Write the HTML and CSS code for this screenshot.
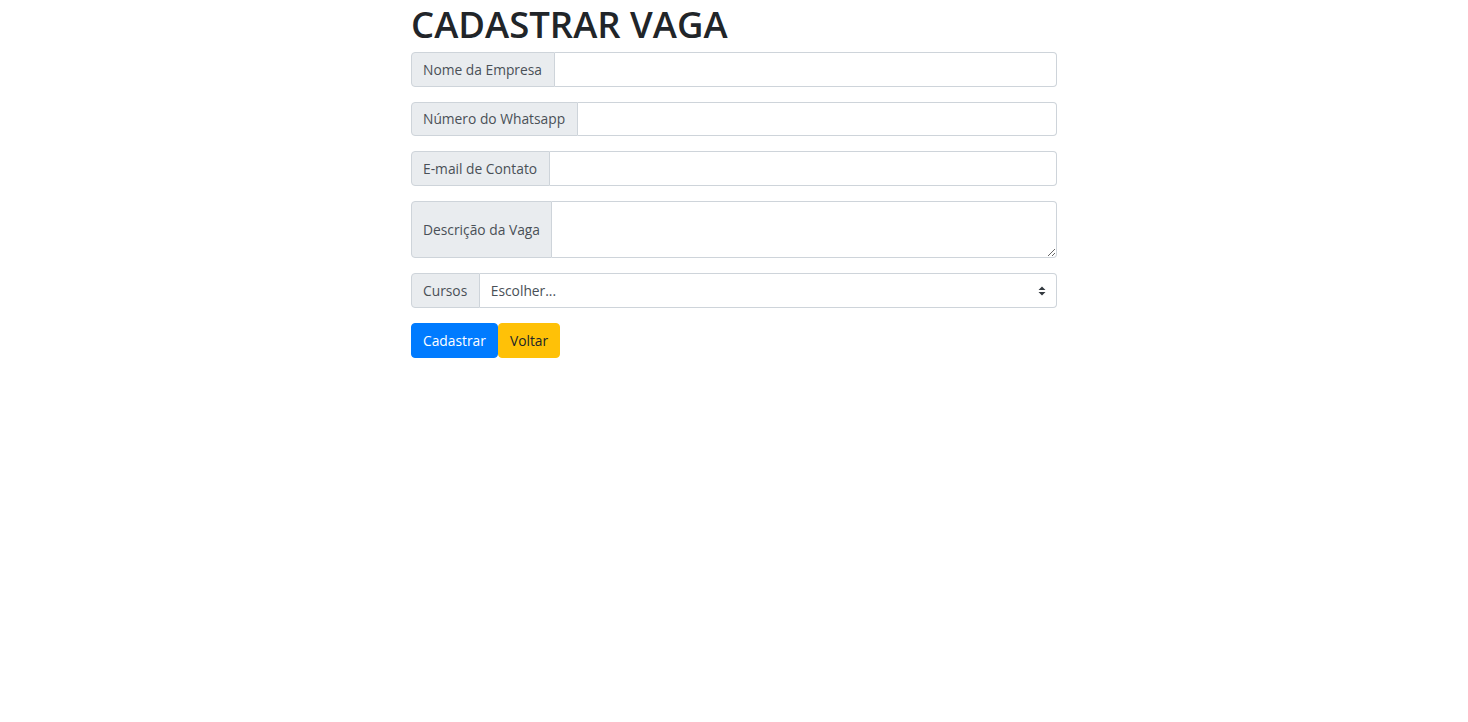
FILE: index.html
```html
<!DOCTYPE html>
<html lang="pt-BR">
<head>
<meta charset="utf-8">
<title>Cadastrar Vaga</title>
<link rel="stylesheet" href="styles.css">
</head>
<body>
<main class="container">
  <h1 class="title">CADASTRAR VAGA</h1>
  <form class="form">
    <div class="input-group">
      <span class="addon">Nome da Empresa</span>
      <input class="control" type="text">
    </div>
    <div class="input-group">
      <span class="addon">Número do Whatsapp</span>
      <input class="control" type="text">
    </div>
    <div class="input-group">
      <span class="addon">E-mail de Contato</span>
      <input class="control" type="email">
    </div>
    <div class="input-group tall">
      <span class="addon">Descrição da Vaga</span>
      <textarea class="control area"></textarea>
    </div>
    <div class="input-group">
      <span class="addon">Cursos</span>
      <div class="control select">
        <span class="select-text">Escolher...</span>
        <svg class="caret" width="8" height="10" viewBox="0 0 8 10"><path d="M4 0.5 L7.5 4 H0.5 Z M4 9.5 L0.5 6 H7.5 Z" fill="#343a40"/></svg>
      </div>
    </div>
    <div class="buttons">
      <button type="button" class="btn primary">Cadastrar</button>
      <button type="button" class="btn warning">Voltar</button>
    </div>
  </form>
</main>
</body>
</html>
```

FILE: styles.css
```css
* { box-sizing: border-box; }
html, body { margin: 0; padding: 0; background: #fff; }
body {
  font-family: "Open Sans", "Noto Sans", sans-serif;
  color: #212529;
}
.container {
  width: 646px;
  margin: 0 auto;
}
.title {
  margin: 0;
  padding-top: 2px;
  font-size: 36.5px;
  font-weight: 600;
  line-height: 44px;
  letter-spacing: 0;
  color: #212529;
}
.form { display: flex; flex-direction: column; gap: 15px; margin-top: 6px; }
.input-group {
  display: flex;
  height: 34.6px;
}
.input-group.tall { height: 57.6px; }
.addon {
  display: flex;
  align-items: center;
  padding: 0 11.5px 0 11px;
  background: #e9ecef;
  border: 1px solid #ced4da;
  border-radius: 4px 0 0 4px;
  font-size: 13.8px;
  color: #495057;
  white-space: nowrap;
}
.control {
  flex: 1;
  min-width: 0;
  border: 1px solid #ced4da;
  border-left: 0;
  border-radius: 0 4px 4px 0;
  background: #fff;
  font-family: inherit;
  font-size: 13.8px;
  color: #495057;
  padding: 0 11px;
  outline: none;
}
.area { resize: vertical; padding: 6px 11px; }
.select {
  display: flex;
  align-items: center;
  justify-content: space-between;
  padding-right: 10px;
}
.buttons { display: flex; }
.btn {
  height: 34.6px;
  padding: 0 11px;
  border: 1px solid transparent;
  border-radius: 4px;
  font-family: inherit;
  font-size: 13.8px;
  cursor: pointer;
}
.primary { background: #007bff; border-color: #007bff; color: #fff; }
.warning { background: #ffc107; border-color: #ffc107; color: #212529; }
```
